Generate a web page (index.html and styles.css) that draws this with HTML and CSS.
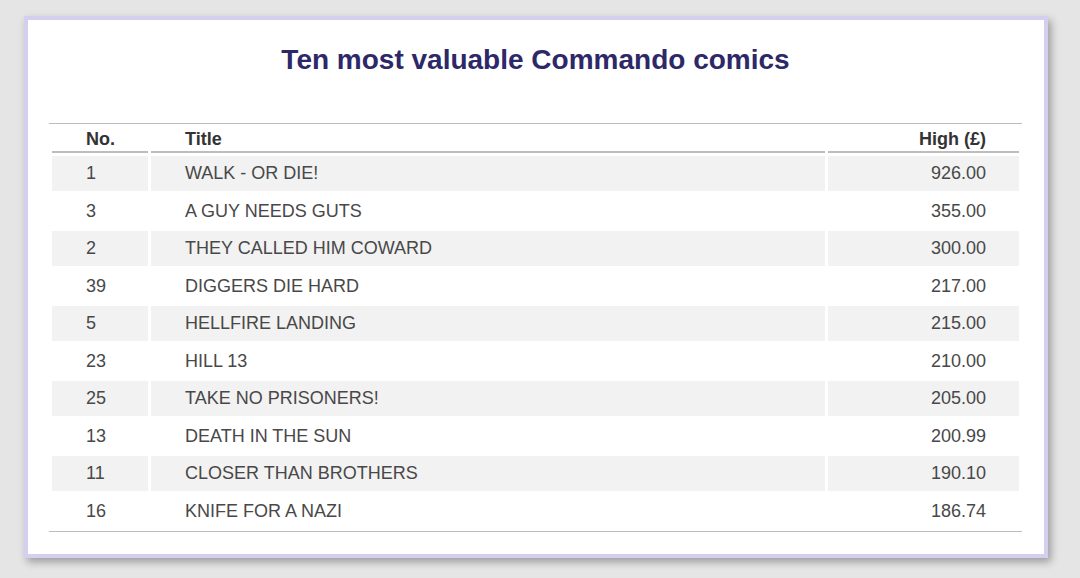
FILE: index.html
```html
<!DOCTYPE html>
<html lang="en">
<head>
<meta charset="utf-8">
<title>Ten most valuable Commando comics</title>
<link rel="stylesheet" href="styles.css">
</head>
<body>
<div class="page">
  <div class="card">
    <h1 class="title">Ten most valuable Commando comics</h1>
    <table class="comics">
      <thead>
        <tr><th class="c-no">No.</th><th class="c-title">Title</th><th class="c-high">High (£)</th></tr>
      </thead>
      <tbody>
        <tr><td class="c-no">1</td><td class="c-title">WALK - OR DIE!</td><td class="c-high">926.00</td></tr>
        <tr><td class="c-no">3</td><td class="c-title">A GUY NEEDS GUTS</td><td class="c-high">355.00</td></tr>
        <tr><td class="c-no">2</td><td class="c-title">THEY CALLED HIM COWARD</td><td class="c-high">300.00</td></tr>
        <tr><td class="c-no">39</td><td class="c-title">DIGGERS DIE HARD</td><td class="c-high">217.00</td></tr>
        <tr><td class="c-no">5</td><td class="c-title">HELLFIRE LANDING</td><td class="c-high">215.00</td></tr>
        <tr><td class="c-no">23</td><td class="c-title">HILL 13</td><td class="c-high">210.00</td></tr>
        <tr><td class="c-no">25</td><td class="c-title">TAKE NO PRISONERS!</td><td class="c-high">205.00</td></tr>
        <tr><td class="c-no">13</td><td class="c-title">DEATH IN THE SUN</td><td class="c-high">200.99</td></tr>
        <tr><td class="c-no">11</td><td class="c-title">CLOSER THAN BROTHERS</td><td class="c-high">190.10</td></tr>
        <tr><td class="c-no">16</td><td class="c-title">KNIFE FOR A NAZI</td><td class="c-high">186.74</td></tr>
      </tbody>
    </table>
  </div>
</div>
</body>
</html>
```

FILE: styles.css
```css
html, body {
  margin: 0;
  padding: 0;
  background: #e5e5e5;
}
body {
  font-family: "Liberation Sans", Arial, sans-serif;
  width: 1080px;
  height: 578px;
  overflow: hidden;
}
.page {
  padding: 16px 32px 20px 24px;
}
.card {
  box-sizing: border-box;
  width: 1024px;
  background: #ffffff;
  border: 4px solid #d3cfee;
  box-shadow: 3px 4px 8px rgba(0, 0, 0, 0.32);
  padding: 24px 22px 22px 21px;
}
.title {
  margin: 0 0 47px 0;
  font-size: 28px;
  line-height: 32px;
  font-weight: bold;
  color: #2d2868;
  text-align: center;
}
.comics {
  width: 973px;
  border-collapse: separate;
  border-spacing: 3px;
  border-top: 1px solid #bdbdbd;
  border-bottom: 1px solid #bdbdbd;
  font-size: 18px;
  table-layout: fixed;
}
.comics th,
.comics td {
  padding: 0 34px;
  white-space: nowrap;
}
.comics th {
  height: 24px;
  line-height: 24px;
  font-weight: bold;
  color: #333333;
  border-bottom: 2px solid #bdbdbd;
}
.comics td {
  height: 34.5px;
  line-height: 20px;
  color: #484848;
}
.comics tbody tr:nth-child(odd) td {
  background: #f2f2f2;
}
.c-no {
  width: 28px;
  text-align: left;
}
.c-title {
  text-align: left;
}
.c-high {
  width: 124px;
  text-align: right;
  padding-right: 33px !important;
  padding-left: 34px;
}
```
